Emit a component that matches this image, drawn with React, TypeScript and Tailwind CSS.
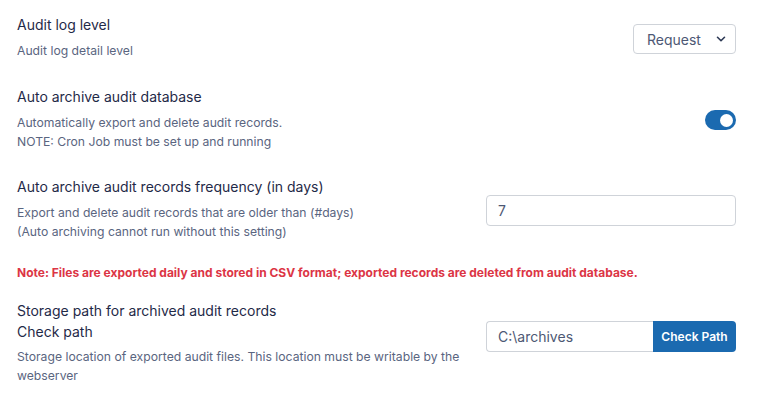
import { ChevronDown } from 'lucide-react'

const font = { fontFamily: 'Inter, "Noto Sans", sans-serif' }

function Title({ children }: { children: React.ReactNode }) {
  return <div className="text-[14px] leading-[21px] text-[#1f2a48]">{children}</div>
}

function Desc({ children, className = '' }: { children: React.ReactNode; className?: string }) {
  return <div className={`text-[12.2px] leading-[19px] text-[#5a6580] ${className}`}>{children}</div>
}

export default function App() {
  return (
    <div className="w-[766px] h-[415px] bg-white pl-[17px] pr-[30px] pt-[14px]" style={font}>
      {/* audit log level */}
      <div className="flex items-start justify-between">
        <div>
          <Title>Audit log level</Title>
          <Desc className="mt-[6px]">Audit log detail level</Desc>
        </div>
        <button className="mt-[10px] h-[30px] w-[103px] flex items-center justify-between pl-[13px] pr-[7px] border border-[#cfd3d9] rounded-[4px] bg-white text-[14px] text-[#4d5874]">
          Request
          <ChevronDown size={14} strokeWidth={2.75} className="text-[#2e3a55]" />
        </button>
      </div>

      {/* auto archive */}
      <div className="flex items-start justify-between mt-[26px]">
        <div>
          <Title>Auto archive audit database</Title>
          <Desc className="mt-[6px]">
            Automatically export and delete audit records.
            <br />
            NOTE: Cron Job must be set up and running
          </Desc>
        </div>
        <div className="mt-[24px] w-[31px] h-[20px] rounded-full bg-[#1b6ab0] flex items-center justify-end pr-[3px]">
          <div className="w-[13px] h-[13px] rounded-full bg-white" />
        </div>
      </div>

      {/* frequency */}
      <div className="flex items-start justify-between mt-[25px]">
        <div>
          <Title>Auto archive audit records frequency (in days)</Title>
          <Desc className="mt-[6px]">
            Export and delete audit records that are older than (#days)
            <br />
            (Auto archiving cannot run without this setting)
          </Desc>
        </div>
        <div className="mt-[19px] w-[250px] h-[31px] border border-[#cfd3d9] rounded-[4px] flex items-center px-[11px] text-[14px] text-[#4d5874]">
          7
        </div>
      </div>

      <div className="mt-[22px] text-[12px] leading-[19px] font-bold text-[#dc3545]">
        Note: Files are exported daily and stored in CSV format; exported records are deleted from audit database.
      </div>

      {/* storage path */}
      <div className="flex items-start justify-between mt-[18px]">
        <div className="w-[455px]">
          <Title>Storage path for archived audit records</Title>
          <Title>Check path</Title>
          <Desc className="mt-[5px]">
            Storage location of exported audit files. This location must be writable by the webserver
          </Desc>
        </div>
        <div className="mt-[21px] w-[250px] h-[31px] flex">
          <div className="flex-1 border border-r-0 border-[#cfd3d9] rounded-l-[4px] flex items-center px-[11px] text-[14px] text-[#4d5874]">
            C:\archives
          </div>
          <button className="w-[83px] bg-[#1b6ab0] rounded-r-[4px] text-white text-[12px] font-semibold">
            Check Path
          </button>
        </div>
      </div>
    </div>
  )
}
